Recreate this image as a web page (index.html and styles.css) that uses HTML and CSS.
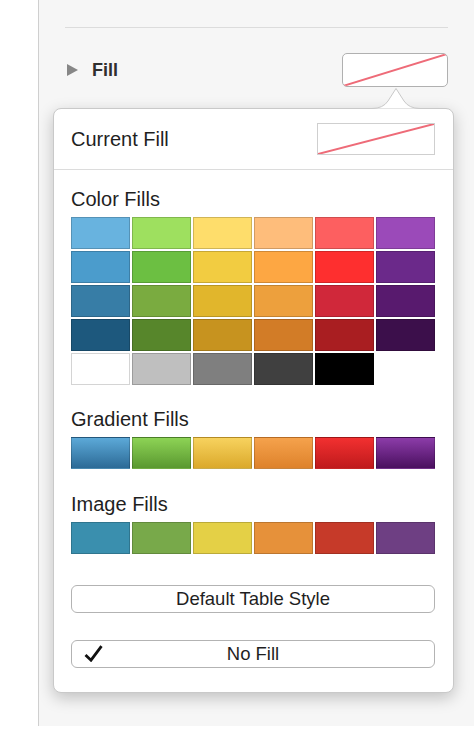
FILE: index.html
```html
<!DOCTYPE html>
<html>
<head>
<meta charset="utf-8">
<link rel="stylesheet" href="styles.css">
</head>
<body>
<div class="page">
  <div class="gutter"></div>
  <div class="panel">
    <div class="rule"></div>
    <div class="fill-row">
      <span class="disclosure"></span>
      <span class="fill-label">Fill</span>
      <div class="well well-main">
        <svg class="slash" viewBox="0 0 100 100" preserveAspectRatio="none"><line x1="0" y1="100" x2="100" y2="0" stroke="#ee6b78" stroke-width="2" vector-effect="non-scaling-stroke"/></svg>
      </div>
    </div>
    <div class="popover">
      <svg class="arrow" width="48" height="22" viewBox="0 0 48 22"><path d="M0 21.5 Q11 21.5 16 14 L24 1.5 L32 14 Q37 21.5 48 21.5" fill="#fff" stroke="#c9c9c9" stroke-width="1"/></svg>
      <div class="current">
        <span class="label">Current Fill</span>
        <div class="well well-current">
          <svg class="slash" viewBox="0 0 100 100" preserveAspectRatio="none"><line x1="0" y1="100" x2="100" y2="0" stroke="#ee6b78" stroke-width="2" vector-effect="non-scaling-stroke"/></svg>
        </div>
      </div>
      <div class="body">
        <div class="label">Color Fills</div>
        <div class="grid">
          <span class="sw c11"></span><span class="sw c12"></span><span class="sw c13"></span><span class="sw c14"></span><span class="sw c15"></span><span class="sw c16"></span>
          <span class="sw c21"></span><span class="sw c22"></span><span class="sw c23"></span><span class="sw c24"></span><span class="sw c25"></span><span class="sw c26"></span>
          <span class="sw c31"></span><span class="sw c32"></span><span class="sw c33"></span><span class="sw c34"></span><span class="sw c35"></span><span class="sw c36"></span>
          <span class="sw c41"></span><span class="sw c42"></span><span class="sw c43"></span><span class="sw c44"></span><span class="sw c45"></span><span class="sw c46"></span>
          <span class="sw c51"></span><span class="sw c52"></span><span class="sw c53"></span><span class="sw c54"></span><span class="sw c55"></span>
        </div>
        <div class="label sec">Gradient Fills</div>
        <div class="grid">
          <span class="sw g1"></span><span class="sw g2"></span><span class="sw g3"></span><span class="sw g4"></span><span class="sw g5"></span><span class="sw g6"></span>
        </div>
        <div class="label sec sec2">Image Fills</div>
        <div class="grid">
          <span class="sw i1"></span><span class="sw i2"></span><span class="sw i3"></span><span class="sw i4"></span><span class="sw i5"></span><span class="sw i6"></span>
        </div>
        <div class="btn btn-first">Default Table Style</div>
        <div class="btn btn-second">
          <svg class="check" width="19" height="17" viewBox="0 0 19 17"><path d="M1.5 10 L7 15.2 L17.5 1.2" fill="none" stroke="#111" stroke-width="2.8" stroke-linejoin="miter"/></svg>
          No Fill
        </div>
      </div>
    </div>
  </div>
</div>
</body>
</html>
```
FILE: styles.css
```css
html, body {
  margin: 0;
  padding: 0;
  background: #fff;
}
body {
  font-family: "Liberation Sans", Arial, sans-serif;
  color: #1f1f1f;
}
.page {
  display: flex;
  width: 474px;
  height: 729px;
}
.gutter {
  width: 38px;
  height: 726px;
  border-right: 1px solid #cfcfcf;
  background: #fff;
}
.panel {
  flex: 1;
  height: 726px;
  background: #f6f6f6;
  padding-top: 27px;
  box-sizing: border-box;
}
.rule {
  height: 1px;
  background: #dcdcdc;
  margin: 0 26px;
}
.fill-row {
  display: flex;
  align-items: center;
  margin-top: 25px;
  height: 34px;
  padding: 0 26px 0 28px;
}
.disclosure {
  width: 0;
  height: 0;
  border-top: 6px solid transparent;
  border-bottom: 6px solid transparent;
  border-left: 11px solid #878787;
}
.fill-label {
  margin-left: 14px;
  font-size: 18px;
  font-weight: bold;
  color: #2f2f2f;
}
.well {
  position: relative;
  background: #fff;
  box-sizing: border-box;
}
.well-main {
  margin-left: auto;
  width: 106px;
  height: 34px;
  border: 1px solid #b0b0b0;
  border-radius: 5px;
  overflow: hidden;
}
.slash {
  display: block;
  width: 100%;
  height: 100%;
}
.popover {
  position: relative;
  margin: 21px 0 0 14px;
  width: 401px;
  background: #fff;
  border: 1px solid #c9c9c9;
  border-radius: 8px;
  box-sizing: border-box;
  box-shadow: 0 5px 16px rgba(0,0,0,0.22);
}
.arrow {
  position: absolute;
  top: -22px;
  left: 318px;
}
.current {
  display: flex;
  align-items: center;
  height: 60px;
  padding: 0 18px 0 17px;
  border-bottom: 1px solid #dcdcdc;
}
.label {
  font-size: 20px;
  line-height: 20px;
  color: #1f1f1f;
}
.well-current {
  margin-left: auto;
  width: 118px;
  height: 32px;
  border: 1px solid #cfcfcf;
}
.body {
  padding: 19px 18px 24px 17px;
}
.grid {
  margin-top: 8px;
  display: grid;
  grid-template-columns: repeat(6, 1fr);
  column-gap: 2px;
  row-gap: 2px;
}
.sec { margin-top: 24px; }
.sec2 { margin-top: 25px; }
.sw {
  height: 32px;
  box-sizing: border-box;
  border: 1px solid rgba(0,0,0,0.18);
}
.c11 { background: #68b3df; }
.c12 { background: #9ee05f; }
.c13 { background: #fedd6b; }
.c14 { background: #febd7b; }
.c15 { background: #fd5f60; }
.c16 { background: #9b4ab9; }
.c21 { background: #4b9ccc; }
.c22 { background: #6cbf42; }
.c23 { background: #f2cc41; }
.c24 { background: #fda743; }
.c25 { background: #fe2f2f; }
.c26 { background: #6b298a; }
.c31 { background: #377da6; }
.c32 { background: #7aab40; }
.c33 { background: #e1b62c; }
.c34 { background: #eda03d; }
.c35 { background: #d0283a; }
.c36 { background: #581a6e; }
.c41 { background: #1d587d; }
.c42 { background: #57862b; }
.c43 { background: #c7931f; }
.c44 { background: #d27c27; }
.c45 { background: #a91e21; }
.c46 { background: #3c0f4b; }
.c51 { background: #fff; border-color: #d4d4d4; }
.c52 { background: #bfbfbf; }
.c53 { background: #7f7f7f; }
.c54 { background: #404040; }
.c55 { background: #000; }
.g1 { background: linear-gradient(#5ca9d8, #2c6a96); }
.g2 { background: linear-gradient(#8dd355, #5a9830); }
.g3 { background: linear-gradient(#f7d25e, #dba92b); }
.g4 { background: linear-gradient(#f5a24c, #de822b); }
.g5 { background: linear-gradient(#f23030, #bf1a1c); }
.g6 { background: linear-gradient(#8c3ca9, #4a105f); }
.i1 { background: #3a8fae; }
.i2 { background: #78a94a; }
.i3 { background: #e4d046; }
.i4 { background: #e6913a; }
.i5 { background: #c63a29; }
.i6 { background: #6e3f83; }
.btn {
  position: relative;
  height: 28px;
  box-sizing: border-box;
  border: 1px solid #b3b3b3;
  border-radius: 6px;
  background: #fff;
  font-size: 18.5px;
  line-height: 26px;
  text-align: center;
  color: #1f1f1f;
}
.btn-first { margin-top: 31px; }
.btn-second { margin-top: 27px; }
.check {
  position: absolute;
  left: 12px;
  top: 4px;
}
```
